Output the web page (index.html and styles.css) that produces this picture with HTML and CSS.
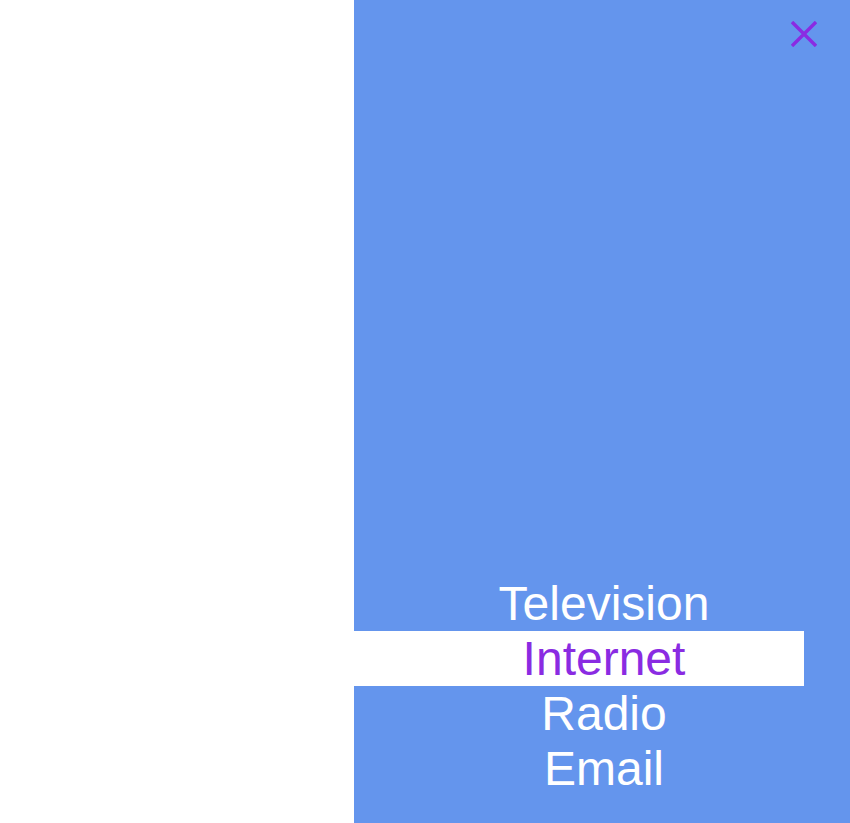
FILE: index.html
```html
<!DOCTYPE html>
<html>
<head>
<meta charset="utf-8">
<link rel="stylesheet" href="styles.css">
</head>
<body>
<div class="page">
  <div class="spacer"></div>
  <nav class="panel">
    <button class="close" aria-label="Close">
      <svg width="26" height="26" viewBox="0 0 26 26"><path d="M1 1 L25 25 M25 1 L1 25" stroke="#8a2be2" stroke-width="3.4" fill="none"/></svg>
    </button>
    <ul class="menu">
      <li class="item">Television</li>
      <li class="item active">Internet</li>
      <li class="item">Radio</li>
      <li class="item">Email</li>
    </ul>
  </nav>
</div>
</body>
</html>
```

FILE: styles.css
```css
html, body {
  margin: 0;
  padding: 0;
  height: 100%;
  background: #ffffff;
  font-family: "Liberation Sans", Arial, sans-serif;
}
.page {
  display: flex;
  height: 823px;
}
.spacer {
  width: 354px;
  flex: none;
}
.panel {
  position: relative;
  flex: 1;
  background: #6495ed;
  display: flex;
  flex-direction: column;
  justify-content: flex-end;
  padding-bottom: 27px;
}
.close {
  position: absolute;
  top: 21px;
  right: 33px;
  width: 26px;
  height: 26px;
  padding: 0;
  border: 0;
  background: none;
  display: flex;
}
.menu {
  list-style: none;
  margin: 0;
  padding: 0;
}
.item {
  font-size: 48px;
  line-height: 55px;
  height: 55px;
  color: #ffffff;
  text-align: center;
  padding-left: 4px;
}
.item.active {
  color: #8a2be2;
  background: linear-gradient(#ffffff, #ffffff) no-repeat left top;
  background-size: 450px 100%;
}
```
